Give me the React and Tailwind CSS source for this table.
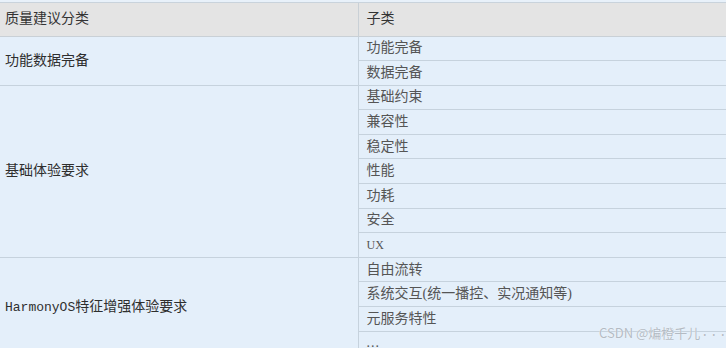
import React from "react";

const groups = [
  { name: "功能数据完备", items: ["功能完备", "数据完备"] },
  { name: "基础体验要求", items: ["基础约束", "兼容性", "稳定性", "性能", "功耗", "安全", "UX"] },
  { name: "HarmonyOS特征增强体验要求", items: ["自由流转", "系统交互(统一播控、实况通知等)", "元服务特性", "..."] },
];

const cjk = "font-['Liberation_Serif','Noto_Sans_CJK_SC',serif]";

function GroupName({ name }) {
  if (name.startsWith("HarmonyOS")) {
    return (
      <span>
        <span className="font-['Liberation_Mono',monospace] text-[13px]">HarmonyOS</span>
        {name.slice(9)}
      </span>
    );
  }
  return name;
}

export default function App() {
  return (
    <div className={`w-[726px] h-[348px] overflow-hidden bg-[#e4effa] relative ${cjk}`}>
      <div className="h-[3px] bg-[#e8f1fa] border-b border-[#c9d3dc]" />
      <table className="w-full border-collapse text-[14px] leading-none">
        <thead>
          <tr className="bg-[#e4e4e4] h-[33px]">
            <th className="w-[358px] text-left font-normal text-[#333] pl-[5px] border-b border-[#c9d0d6]">质量建议分类</th>
            <th className="text-left font-normal text-[#333] pl-[8px] border-b border-l border-[#c9d0d6]">子类</th>
          </tr>
        </thead>
        <tbody>
          {groups.map((g) =>
            g.items.map((item, i) => (
              <tr key={g.name + item} className="h-[24.6px]">
                {i === 0 && (
                  <td rowSpan={g.items.length} className="pl-[5px] text-[#2e2e2e] border-b border-[#c6d2dd] align-middle">
                    <GroupName name={g.name} />
                  </td>
                )}
                <td className={`pl-[8px] text-[#555] border-l border-b border-[#c6d2dd] ${item === "UX" ? "text-[12px]" : ""} ${item === "..." ? "tracking-[1px]" : ""}`}>
                  {item}
                </td>
              </tr>
            ))
          )}
        </tbody>
      </table>
      <div className="absolute left-[599px] top-[326px] whitespace-nowrap text-[13px] leading-none text-[#b3bbc4] font-['Noto_Sans_CJK_SC',sans-serif] [text-shadow:0_0_1px_#fff]">
        CSDN @煸橙千儿<span className="text-[9px]">···</span>
      </div>
    </div>
  );
}
